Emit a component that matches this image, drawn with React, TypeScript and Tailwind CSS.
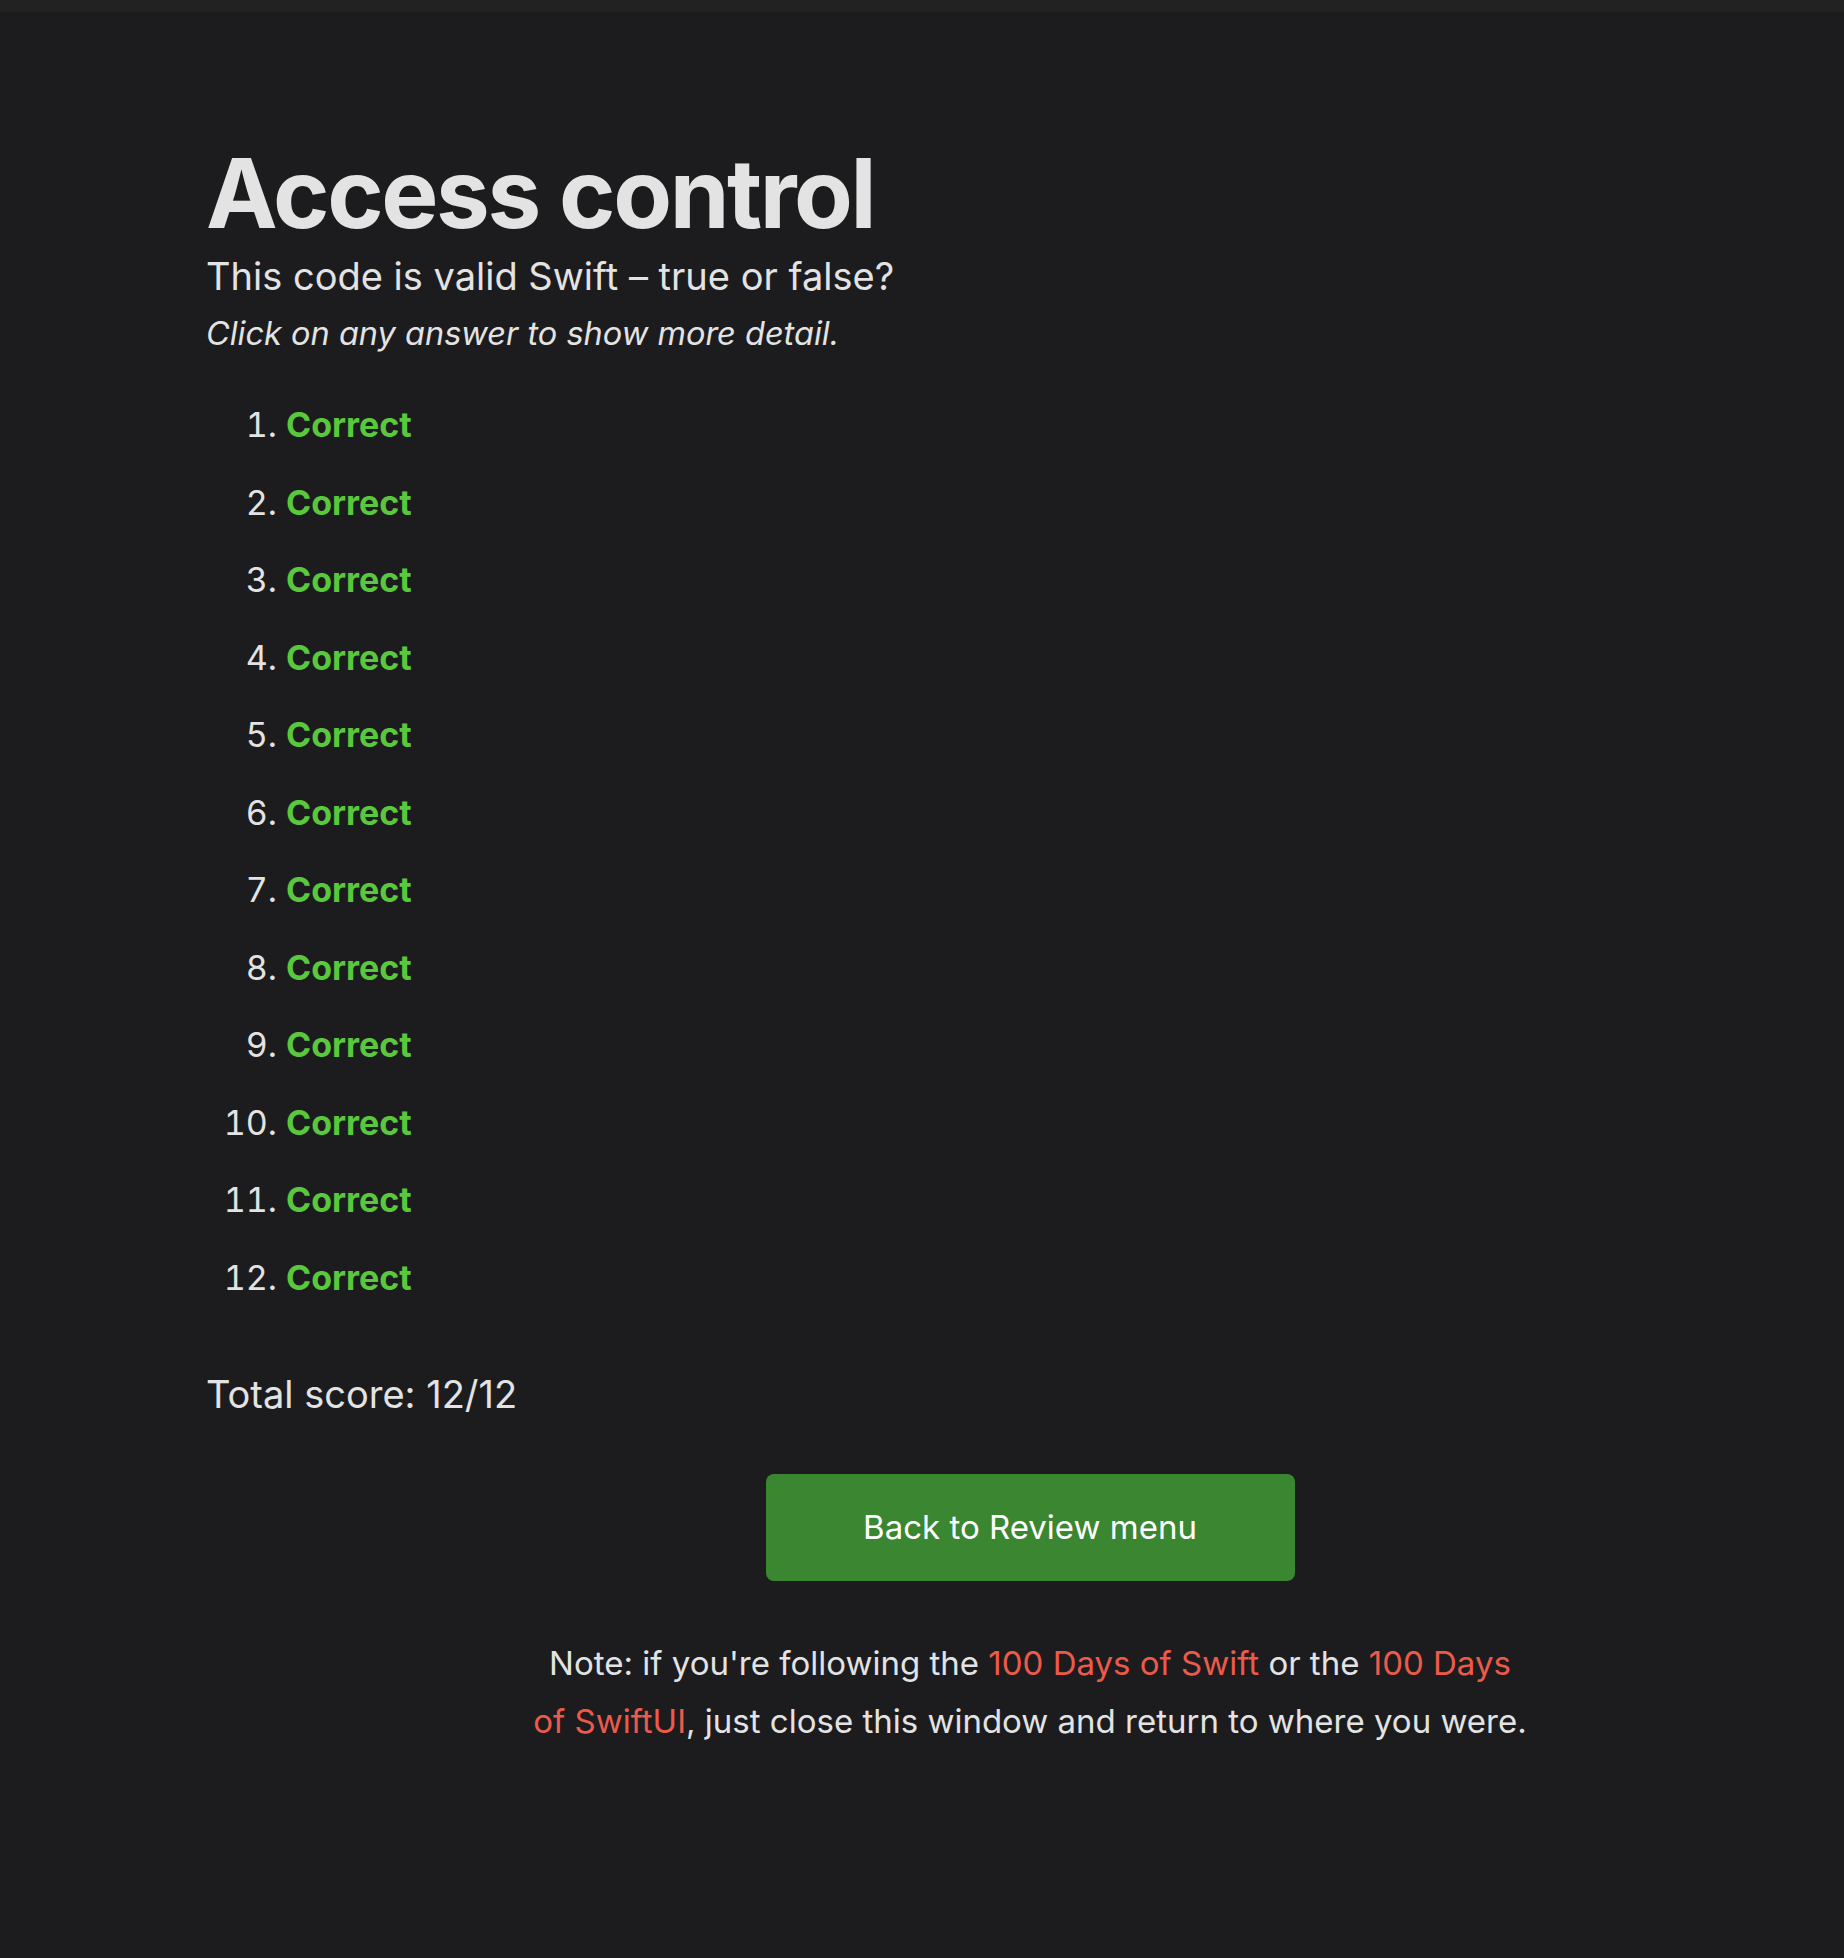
const answers = Array.from({ length: 12 }, (_, i) => i + 1);

export default function App() {
  return (
    <div className="min-h-screen bg-[#1c1c1e] font-['Inter',sans-serif] text-[#e3e3e3] overflow-hidden">
      <div className="h-[12px] bg-[#222222]" />
      <div className="pl-[206px] pt-[133px] pb-[200px]">
        <h1 className="text-[96px] leading-none font-bold tracking-[-0.025em] text-[#e3e3e3]">Access control</h1>
        <p className="mt-[11px] text-[38px] leading-[48px]">This code is valid Swift – true or false?</p>
        <p className="mt-[14px] text-[32.5px] leading-[40px] italic">Click on any answer to show more detail.</p>

        <ol className="mt-[32px] list-decimal list-outside pl-[80px] text-[34px] leading-[77.5px]">
          {answers.map((n) => (
            <li key={n} className="marker:text-[#e3e3e3]">
              <span className="font-bold text-[#5ac83c] cursor-pointer">Correct</span>
            </li>
          ))}
        </ol>

        <p className="mt-[54px] text-[38px] leading-[48px]">Total score: 12/12</p>

        <div className="pl-[10px] flex flex-col items-center">
          <button className="mt-[56px] w-[529px] h-[107px] rounded-[8px] bg-[#3b8631] text-white text-[33px]">
            Back to Review menu
          </button>
          <p className="mt-[54px] max-w-[996px] text-center text-[33px] leading-[57.5px]">
            Note: if you're following the <a className="text-[#ec5a4a]">100 Days of Swift</a> or the{' '}
            <a className="text-[#ec5a4a]">100 Days of SwiftUI</a>, just close this window and return to where you were.
          </p>
        </div>
      </div>
    </div>
  );
}
